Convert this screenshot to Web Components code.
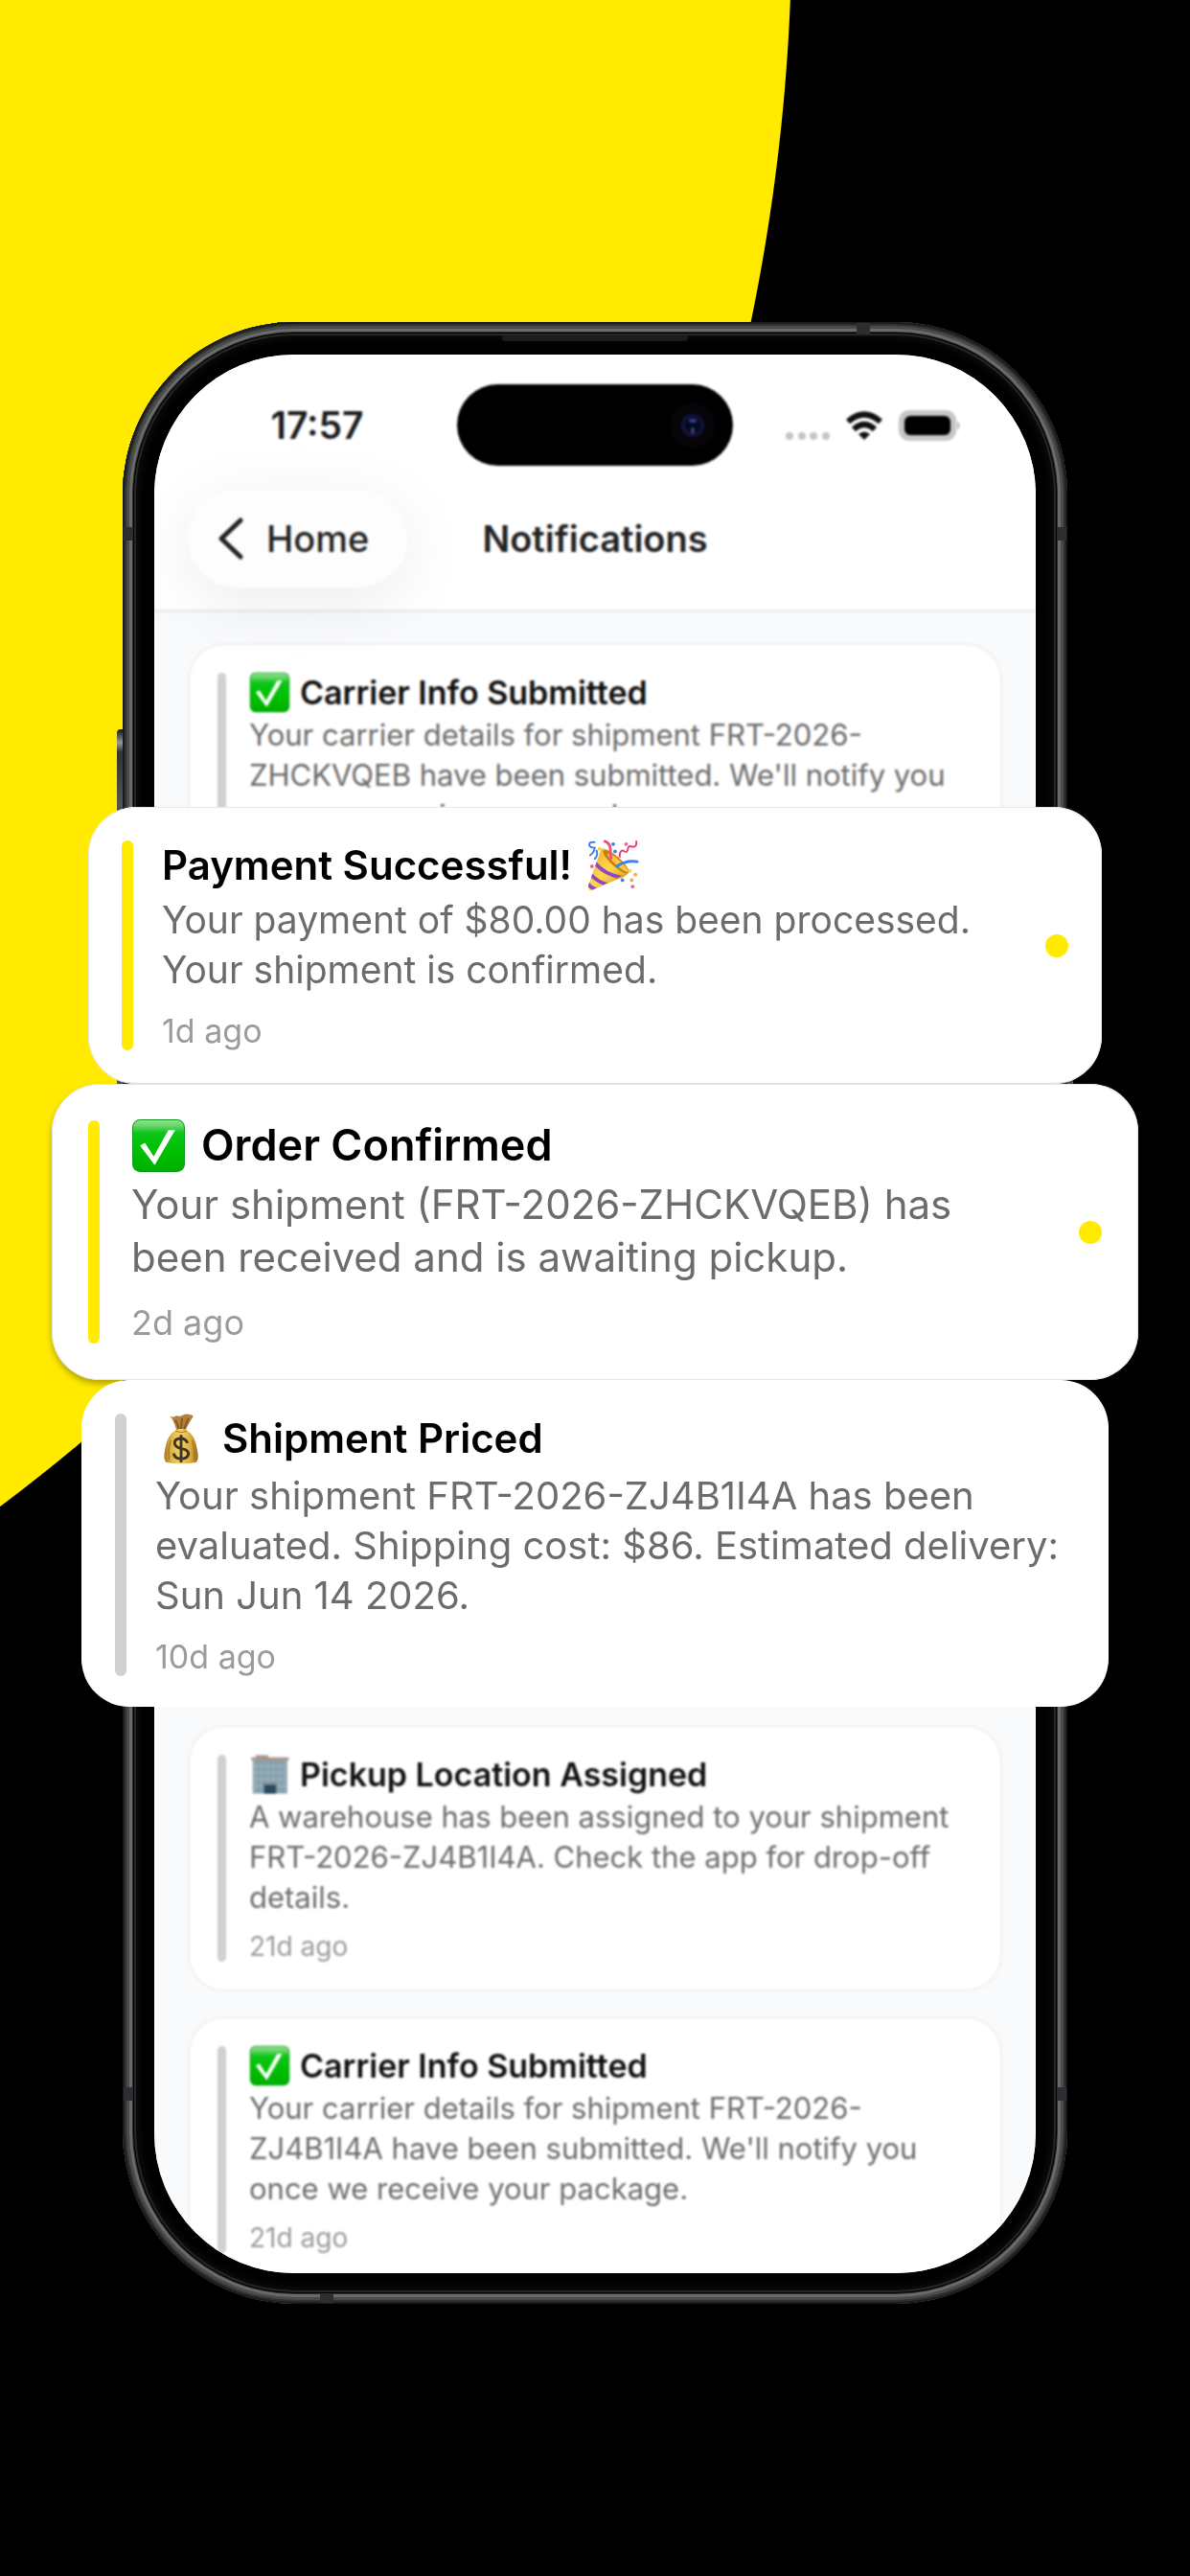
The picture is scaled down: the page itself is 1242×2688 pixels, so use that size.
<!DOCTYPE html>
<html lang="en">
<head>
<meta charset="utf-8">
<meta name="viewport" content="width=device-width, initial-scale=1">
<title>Notifications</title>
<style>
  * {
    box-sizing: border-box;
  }
  body {
    margin: 0;
    min-height: 100vh;
    background: #000;
    font-family: Inter, "Liberation Sans", sans-serif;
  }
</style>
</head>
<body>

<promo-page>
  <phone-frame slot="phone">
    <status-bar slot="header" time="17:57"></status-bar>
    <nav-header slot="header" back="Home">Notifications</nav-header>

    <notification-card>
      <emoji-icon slot="icon" name="check"></emoji-icon>
      <span slot="title">Carrier Info Submitted</span>
      Your carrier details for shipment FRT-2026-ZHCKVQEB have been submitted. We'll notify you once we receive your package.
    </notification-card>
    <list-gap></list-gap>
    <notification-card time="21d ago">
      <emoji-icon slot="icon" name="office"></emoji-icon>
      <span slot="title">Pickup Location Assigned</span>
      A warehouse has been assigned to your shipment FRT-2026-ZJ4B1I4A. Check the app for drop-off details.
    </notification-card>
    <notification-card time="21d ago">
      <emoji-icon slot="icon" name="check"></emoji-icon>
      <span slot="title">Carrier Info Submitted</span>
      Your carrier details for shipment FRT-2026-ZJ4B1I4A have been submitted. We'll notify you once we receive your package.
    </notification-card>
  </phone-frame>

  <notification-card slot="stack" size="medium" unread time="1d ago">
    <span slot="title">Payment Successful!</span>
    <emoji-icon slot="trailing" name="party"></emoji-icon>
    Your payment of $80.00 has been processed. Your shipment is confirmed.
  </notification-card>
  <notification-card slot="stack" size="large" unread time="2d ago">
    <emoji-icon slot="icon" name="check"></emoji-icon>
    <span slot="title">Order Confirmed</span>
    Your shipment (FRT-2026-ZHCKVQEB) has been received and is awaiting pickup.
  </notification-card>
  <notification-card slot="stack" size="wide" time="10d ago">
    <emoji-icon slot="icon" name="money"></emoji-icon>
    <span slot="title">Shipment Priced</span>
    Your shipment FRT-2026-ZJ4B1I4A has been evaluated. Shipping cost: $86. Estimated delivery: Sun Jun 14 2026.
  </notification-card>
</promo-page>

<script>
const EMOJI = {
  check: `
    <defs>
      <linearGradient id="g" x1="0" y1="0" x2="0" y2="1">
        <stop offset="0" stop-color="#8fe08f"/><stop offset=".12" stop-color="#62d562"/>
        <stop offset=".25" stop-color="#0cc51b"/><stop offset=".6" stop-color="#00c000"/>
        <stop offset="1" stop-color="#00ae00"/>
      </linearGradient>
    </defs>
    <rect x="1" y="1" width="54" height="54" rx="8" fill="#0d9a1c"/>
    <rect x="2" y="2" width="52" height="52" rx="7" fill="url(#g)"/>
    <path d="M9 28 L14 25 L23 39 L38 12 L45 12 L24 48 Z" fill="#fff"/>`,
  party: `
    <defs>
      <linearGradient id="g" x1="0" y1="0" x2="1" y2="1">
        <stop offset="0" stop-color="#e9a92c"/><stop offset=".5" stop-color="#ffd84d"/>
        <stop offset="1" stop-color="#c98412"/>
      </linearGradient>
      <clipPath id="c"><path d="M15 10 L45 35 Q28 45 2 56 Q0 54 1 50 Z"/></clipPath>
    </defs>
    <path d="M15 10 Q20 8 32 18 Q44 28 45 35 Q43 41 30 44 L5 55 Q0 56 1 50 Z" fill="url(#g)"/>
    <g clip-path="url(#c)" fill="none" stroke="#9146c8" stroke-width="4">
      <path d="M8 25 Q18 38 40 42"/><path d="M3 37 Q10 46 25 50"/><path d="M0 47 Q4 53 12 55"/>
    </g>
    <ellipse cx="31" cy="24" rx="5" ry="18" fill="#c77d10" transform="rotate(-48 31 24)"/>
    <ellipse cx="33" cy="25" rx="3" ry="15" fill="#f7c840" transform="rotate(-48 33 25)"/>
    <g fill="none" stroke-linecap="round" stroke-width="3">
      <path d="M8 3 Q2 2 2 6 Q3 9 8 9 Q7 15 3 17 M10 12 Q12 17 8 21" stroke="#3b7bf0" stroke-width="2"/>
      <path d="M19 2 Q25 4 25 11 Q24 16 26 20" stroke="#f0507c"/>
      <path d="M35 19 Q35 11 39 12 Q43 16 44 10 Q44 6 49 8 Q54 8 53 2" stroke="#e63f72" stroke-width="2"/>
      <path d="M32 29 Q42 22 54 24" stroke="#3b82f6"/>
    </g>
    <g fill="#3b82f6"><circle cx="28" cy="5" r="2"/><circle cx="30" cy="13" r="2"/><circle cx="38" cy="44" r="2"/></g>
    <g fill="#f0609c"><circle cx="42" cy="5" r="2"/><circle cx="5" cy="29" r="2"/><circle cx="49" cy="51" r="2"/></g>
    <g fill="#f5a742"><circle cx="52" cy="38" r="2"/><circle cx="48" cy="44" r="2"/></g>
    <g fill="#f0dc4a"><circle cx="13" cy="10" r="2"/><circle cx="46" cy="34" r="2"/></g>`,
  money: `
    <defs>
      <linearGradient id="g" x1="0" y1="0" x2="1" y2="0">
        <stop offset="0" stop-color="#a9781f"/><stop offset=".25" stop-color="#e3bd4c"/>
        <stop offset=".5" stop-color="#f2d468"/><stop offset=".8" stop-color="#d9a93a"/>
        <stop offset="1" stop-color="#94641a"/>
      </linearGradient>
    </defs>
    <path d="M16 4 Q20 6 23 3 Q26 5 29 3 Q34 1 37 2 Q43 3 40 6 Q36 12 33 19 L23 19 Q21 10 16 4 Z" fill="#b4813a"/>
    <path d="M22 8 L26 18 M29 6 L28 18 M36 6 L31 18" stroke="#865822" stroke-width="2" fill="none"/>
    <path d="M22 19 Q28 16 34 19 Q43 25 45 38 Q48 51 44 54 Q28 57 12 54 Q8 51 11 38 Q13 25 22 19 Z" fill="url(#g)"/>
    <path d="M17 30 Q13 40 15 51 M40 30 Q43 40 42 51 M22 20 Q28 23 34 20" stroke="#a5731e" stroke-width="1" fill="none"/>
    <path d="M35 33 Q33 28 28 28 Q21 28 21 33 Q21 37 28 39 Q36 40 36 45 Q35 50 28 50 Q21 50 20 44 M28 24 V54" stroke="#403423" stroke-width="3" fill="none"/>`,
  office: `
    <rect x="5" y="6" width="47" height="48" fill="#8ba3b0"/>
    <path d="M3 5 H9 V2 H26 V5 H54 V9 H3 Z" fill="#a8968a"/>
    <path d="M5 17 H52 M5 26 H52 M5 35 H52 M5 44 H52" stroke="#9bb2be" stroke-width="3"/>
    <path d="M13 9 V54 M21 9 V54 M29 9 V54 M37 9 V54 M45 9 V54" stroke="#7d97a5" stroke-width="1"/>
    <path d="M5 9 H8 V54 H5 Z M49 9 H52 V54 H49 Z" fill="#9badb7"/>
    <rect x="19" y="40" width="19" height="14" fill="#6e7f86"/>
    <rect x="21" y="43" width="15" height="11" fill="#294a5e"/>`
};

class EmojiIcon extends HTMLElement {
  constructor() {
    super();
    this.attachShadow({ mode: 'open' });
  }

  connectedCallback() {
    this.shadowRoot.innerHTML = `
      <style>
        :host {
          display: block;
          flex: none;
          width: var(--emoji-size, 43px);
          height: var(--emoji-size, 43px);
        }
        svg {
          display: block;
          width: 100%;
          height: 100%;
        }
      </style>
      <svg viewBox="0 0 56 56" aria-hidden="true">${EMOJI[this.getAttribute('name')]}</svg>
    `;
  }
}
customElements.define('emoji-icon', EmojiIcon);

class NotificationCard extends HTMLElement {
  constructor() {
    super();
    this.attachShadow({ mode: 'open' });
  }

  connectedCallback() {
    const time = this.getAttribute('time');
    this.shadowRoot.innerHTML = `
      <style>
        * {
          box-sizing: border-box;
        }
        :host {
          --emoji-size: 43px;
          --title: 600 34px/41px Inter, sans-serif;
          --body: 400 31px/42px Inter, sans-serif;
          --time: 400 28px/32px Inter, sans-serif;
          --title-gap: 3px;
          --time-gap: 14px;
          --bar: #d1d1d1;
          box-sizing: border-box;
          display: flex;
          gap: 24px;
          padding: 29px;
          border-radius: 36px;
          background: #fff;
          box-shadow: 0 0 0 2px #f0f0f1;
          color: #111;
        }
        :host([size]) {
          --title: 600 42px/52px Inter, sans-serif;
          --body: 400 39px/52px Inter, sans-serif;
          --time: 400 34px/40px Inter, sans-serif;
          --emoji-size: 54px;
          --title-gap: 5px;
          --time-gap: 18px;
          gap: 30px;
          padding: 35px;
          border-radius: 50px;
          box-shadow: inset 0 0 0 1px #e6e6e6, 0 4px 6px rgba(0, 0, 0, 0.3);
          color: #000;
        }
        :host([size="medium"]) {
          margin: 0 38px;
          box-shadow: inset 0 0 0 1px #e6e6e6;
        }
        :host([size="large"]) {
          --title: 600 45px/52px Inter, sans-serif;
          --body: 400 42px/55px Inter, sans-serif;
          --time: 400 36px/43px Inter, sans-serif;
          --emoji-size: 57px;
          --title-gap: 8px;
          --time-gap: 20px;
          gap: 33px;
          padding: 38px;
        }
        :host([size="wide"]) {
          --body: 400 40px/52px Inter, sans-serif;
          --title-gap: 8px;
          margin: 0 31px;
          padding: 35px 35px 32px;
          box-shadow: none;
        }
        :host([unread]) {
          --bar: #ffea00;
        }
        .bar {
          flex: none;
          width: 9px;
          border-radius: 6px;
          background: var(--bar);
        }
        :host([size]) .bar {
          width: 12px;
        }
        .content {
          flex: 1;
          min-width: 0;
        }
        h2 {
          display: flex;
          align-items: center;
          gap: 10px;
          height: 1lh;
          margin: 0 0 var(--title-gap);
          font: var(--title);
        }
        :host([size]) h2 {
          gap: 16px;
        }
        p {
          margin: 0;
          font: var(--body);
          color: #6c6c6c;
        }
        time {
          display: block;
          margin-top: var(--time-gap);
          font: var(--time);
          color: #9b9b9b;
        }
        .dot {
          align-self: center;
          flex: none;
          width: 24px;
          height: 24px;
          border-radius: 50%;
          background: #ffea00;
        }
      </style>
      <div class="bar"></div>
      <div class="content">
        <h2><slot name="icon"></slot><slot name="title"></slot><slot name="trailing"></slot></h2>
        <p><slot></slot></p>
        ${time ? `<time>${time}</time>` : ''}
      </div>
      ${this.hasAttribute('unread') ? '<div class="dot"></div>' : ''}
    `;
  }
}
customElements.define('notification-card', NotificationCard);

// Room in the list for the cards that are lifted out of it
class ListGap extends HTMLElement {
  constructor() {
    super();
    this.attachShadow({ mode: 'open' }).innerHTML = `
      <style>
        :host {
          display: block;
          height: 841px;
        }
      </style>
    `;
  }
}
customElements.define('list-gap', ListGap);

class StatusBar extends HTMLElement {
  constructor() {
    super();
    this.attachShadow({ mode: 'open' });
  }

  connectedCallback() {
    this.shadowRoot.innerHTML = `
      <style>
        :host {
          display: grid;
          grid-template-columns: 1fr 288px 1fr;
          align-items: center;
          padding-top: 31px;
        }
        .time {
          padding-left: 24px;
          text-align: center;
          font: 600 39px/44px Inter, sans-serif;
          color: #1c1c1e;
        }
        .island {
          display: flex;
          align-items: center;
          justify-content: flex-end;
          height: 85px;
          padding-right: 19px;
          border-radius: 43px;
          background: #000;
        }
        .icons {
          display: flex;
          align-items: center;
          justify-content: center;
          gap: 16px;
          padding-right: 24px;
        }
      </style>
      <div class="time">${this.getAttribute('time')}</div>
      <div class="island">
        <svg width="46" height="46" viewBox="0 0 46 46" aria-hidden="true">
          <circle cx="23" cy="23" r="23" fill="#07050a"/>
          <circle cx="23" cy="23" r="12" fill="#10133a"/>
          <circle cx="23" cy="23" r="8" fill="#060720"/>
          <ellipse cx="23" cy="18" rx="4" ry="2" fill="#3c3f8e"/>
          <circle cx="23" cy="27" r="2" fill="#146058"/>
          <circle cx="23" cy="30" r="2" fill="#5b2a78"/>
        </svg>
      </div>
      <div class="icons">
        <svg width="46" height="32" viewBox="0 0 46 32" fill="#c4c4c4" aria-hidden="true">
          <circle cx="4" cy="27" r="4"/><circle cx="17" cy="27" r="4"/>
          <circle cx="29" cy="27" r="4"/><circle cx="42" cy="27" r="4"/>
        </svg>
        <svg width="40" height="30" viewBox="0 0 40 30" fill="none" stroke="#111" stroke-width="6" aria-hidden="true">
          <path d="M3 11 Q20 -4 37 11"/>
          <path d="M9 19 Q20 9 31 19"/>
          <path d="M20 30 L14 24 Q20 19 26 24 Z" fill="#111" stroke="none"/>
        </svg>
        <svg width="65" height="32" viewBox="0 0 65 32" aria-hidden="true">
          <rect width="60" height="32" rx="11" fill="#c6c6c6"/>
          <rect x="6" y="6" width="48" height="20" rx="6" fill="#000"/>
          <path d="M61 11 Q66 16 61 21 Z" fill="#b9b9b9"/>
        </svg>
      </div>
    `;
  }
}
customElements.define('status-bar', StatusBar);

class NavHeader extends HTMLElement {
  constructor() {
    super();
    this.attachShadow({ mode: 'open' });
  }

  connectedCallback() {
    this.shadowRoot.innerHTML = `
      <style>
        :host {
          display: grid;
          grid-template-columns: 1fr auto 1fr;
          align-items: center;
          padding: 25px 35px 23px;
          color: #222;
        }
        button {
          display: flex;
          align-items: center;
          justify-self: start;
          gap: 24px;
          height: 102px;
          padding: 0 40px 0 32px;
          border: 0;
          border-radius: 51px;
          background: #fdfdfd;
          box-shadow: 0 14px 70px rgba(0, 0, 0, 0.08);
          color: inherit;
          font: 500 38px/44px Inter, sans-serif;
        }
        h1 {
          margin: 0;
          font: 600 38px/44px Inter, sans-serif;
        }
      </style>
      <button type="button">
        <svg width="26" height="44" viewBox="0 0 26 44" fill="none" stroke="#222" stroke-width="5" stroke-linecap="round" stroke-linejoin="round" aria-hidden="true">
          <path d="M23 3 L3 22 L23 41"/>
        </svg>
        ${this.getAttribute('back')}
      </button>
      <h1><slot></slot></h1>
    `;
  }
}
customElements.define('nav-header', NavHeader);

class PhoneFrame extends HTMLElement {
  constructor() {
    super();
    this.attachShadow({ mode: 'open' }).innerHTML = `
      <style>
        * {
          box-sizing: border-box;
        }
        :host {
          box-sizing: border-box;
          position: relative;
          display: block;
          padding: 34px 33px 32px;
          border-radius: 180px;
          background: #000;
          box-shadow:
            inset 0 0 0 2px #1b1b1b,
            inset 0 0 0 4px #303030,
            inset 0 0 0 7px #4a4a49,
            inset 0 0 0 10px #6a6a68,
            inset 0 0 0 11px #2c2c2c,
            inset 0 0 0 12px #000,
            inset 0 0 0 14px #262626,
            inset 0 0 12px 14px #161616;
        }
        .screen {
          overflow: hidden;
          border-radius: 146px;
          background: #fff;
        }
        .content {
          background: #f9fafc;
          filter: blur(1px);
        }
        header {
          position: relative;
          background: #fff;
          border-bottom: 3px solid #ededee;
        }
        .list {
          display: flex;
          flex-direction: column;
          gap: 30px;
          padding: 34px 37px 0;
        }
        /* the last card runs on below the edge of the screen */
        .list::after {
          content: "";
          margin-top: -38px;
        }
        .part {
          position: absolute;
          background: #2d2e31;
        }
        .top { top: 1px; right: 206px; width: 14px; height: 11px; }
        .bottom { bottom: 1px; left: 206px; width: 14px; height: 10px; }
        .left { left: 1px; width: 10px; height: 14px; }
        .right { right: 1px; width: 10px; height: 14px; }
        .upper { top: 214px; }
        .lower { bottom: 212px; }
        .speaker {
          top: 14px;
          left: 50%;
          width: 194px;
          height: 6px;
          margin-left: -97px;
          border-radius: 0 0 4px 4px;
          background: #1c1c1c;
        }
        .key {
          width: 6px;
          background: linear-gradient(#111, #999 14px, #333 24px, #555 90%, #111);
        }
        .action { top: 425px; left: -6px; height: 90px; border-radius: 4px 0 0 4px; }
        .volume { top: 600px; left: -6px; height: 240px; }
        .power { top: 600px; right: -6px; height: 240px; }
      </style>
      <div class="screen">
        <div class="content">
          <header><slot name="header"></slot></header>
          <div class="list"><slot></slot></div>
        </div>
      </div>
      <div class="part speaker"></div>
      <div class="part top"></div>
      <div class="part bottom"></div>
      <div class="part left upper"></div>
      <div class="part left lower"></div>
      <div class="part right upper"></div>
      <div class="part right lower"></div>
      <div class="part key action"></div>
      <div class="part key volume"></div>
      <div class="part key power"></div>
    `;
  }
}
customElements.define('phone-frame', PhoneFrame);

class PromoPage extends HTMLElement {
  constructor() {
    super();
    this.attachShadow({ mode: 'open' }).innerHTML = `
      <style>
        :host {
          box-sizing: border-box;
          display: grid;
          align-items: start;
          min-height: 100vh;
          overflow: hidden;
          padding: 336px 54px 284px;
          background: radial-gradient(circle at -1244px -83px, #ffea00 2070px, #000 2071px);
        }
        .phone, .stack {
          grid-area: 1 / 1;
        }
        .phone {
          padding: 0 74px;
        }
        /* the lifted cards lie over the phone */
        .stack {
          position: relative;
          padding-top: 506px;
        }
      </style>
      <div class="phone"><slot name="phone"></slot></div>
      <div class="stack"><slot name="stack"></slot></div>
    `;
  }
}
customElements.define('promo-page', PromoPage);
</script>
</body>
</html>
